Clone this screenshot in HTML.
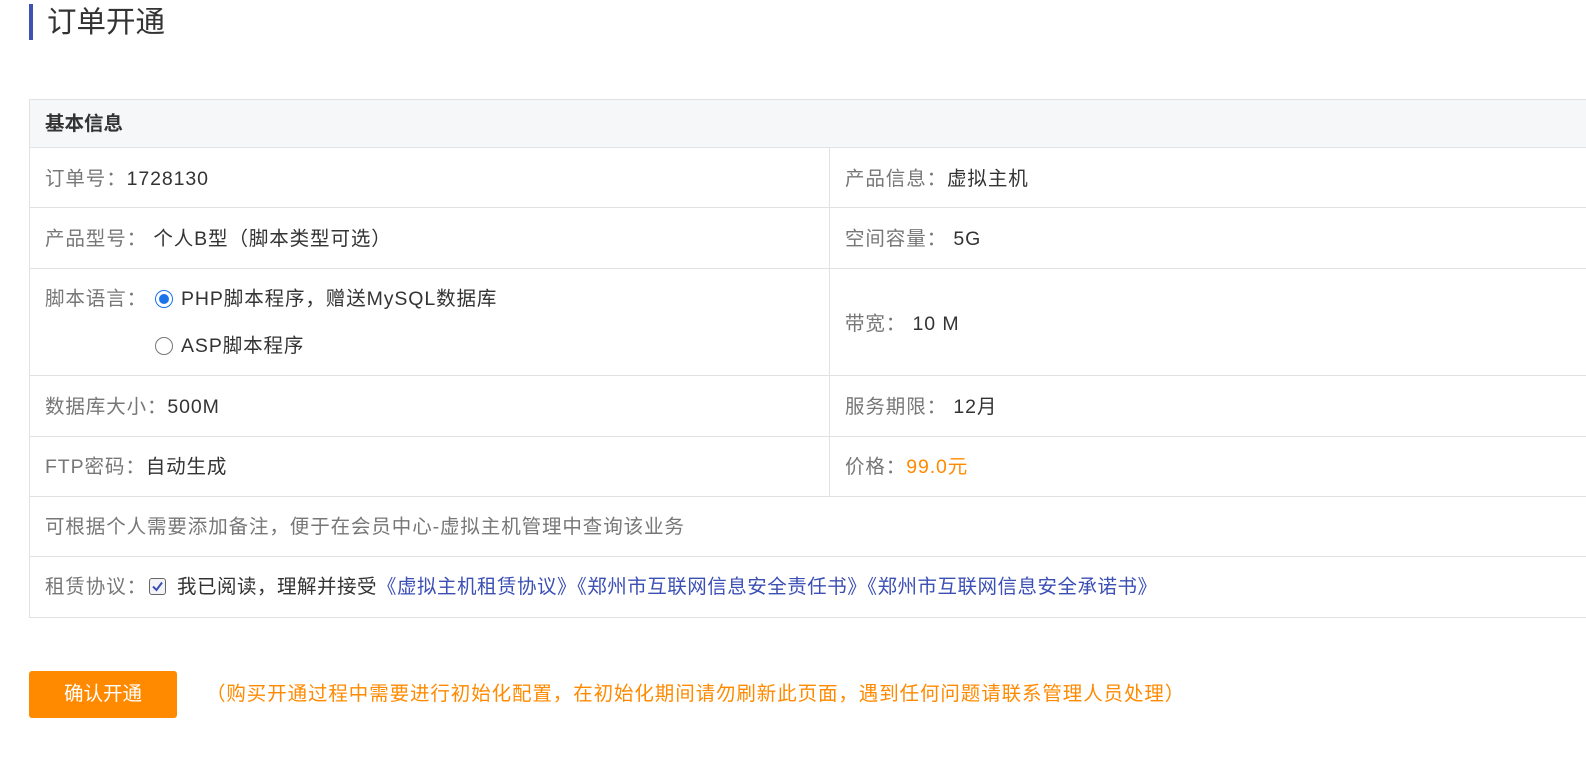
<!DOCTYPE html>
<html><head><meta charset="utf-8"><style>
body{margin:0;width:1586px;height:761px;overflow:hidden;background:#fff;font-family:"Liberation Sans","Noto Sans CJK SC",sans-serif;color:#333;position:relative}
.a{position:absolute;white-space:nowrap}
.l{color:#777}
.h{position:absolute;left:29px;width:1600px;height:1px;background:#e2e2e2}
.v{position:absolute;width:1px;background:#e2e2e2}
.t{font-size:19.5px;line-height:26px;letter-spacing:0.9px}
.lnk{color:#3c4fb4}
</style></head><body>
<div class="a" style="left:29px;top:4px;width:4px;height:36px;background:#3f51b5"></div>
<div class="a" style="left:47px;top:3px;font-size:29.5px;line-height:40px;color:#333">订单开通</div>

<div class="a" style="left:29px;top:99px;width:1600px;height:49px;background:#f6f7f9"></div>
<div class="h" style="top:99px"></div>
<div class="h" style="top:147px"></div>
<div class="h" style="top:207px"></div>
<div class="h" style="top:268px"></div>
<div class="h" style="top:375px"></div>
<div class="h" style="top:436px"></div>
<div class="h" style="top:496px"></div>
<div class="h" style="top:556px"></div>
<div class="h" style="top:617px"></div>
<div class="v" style="left:29px;top:99px;height:519px"></div>
<div class="v" style="left:829px;top:148px;height:348px"></div>

<div class="a t" style="left:45px;top:111px;font-weight:bold;color:#333;letter-spacing:0">基本信息</div>
<div class="a t" style="left:45px;top:166px"><span class="l">订单号：</span>1728130</div>
<div class="a t" style="left:845px;top:166px"><span class="l">产品信息：</span>虚拟主机</div>
<div class="a t" style="left:45px;top:226px"><span class="l">产品型号：</span> 个人B型（脚本类型可选）</div>
<div class="a t" style="left:845px;top:226px"><span class="l">空间容量：</span> 5G</div>
<div class="a t" style="left:45px;top:286px"><span class="l">脚本语言：</span></div>
<div class="a" style="left:155px;top:290px;width:18px;height:18px;border:1px solid #1a73e8;border-radius:50%;box-sizing:border-box"><div style="position:absolute;left:3px;top:3px;width:10px;height:10px;border-radius:50%;background:#1a73e8"></div></div>
<div class="a t" style="left:181px;top:286px">PHP脚本程序，赠送MySQL数据库</div>
<div class="a" style="left:155px;top:337px;width:18px;height:18px;border:1px solid #777;border-radius:50%;box-sizing:border-box"></div>
<div class="a t" style="left:181px;top:333px">ASP脚本程序</div>
<div class="a t" style="left:845px;top:311px"><span class="l">带宽：</span> 10 M</div>
<div class="a t" style="left:45px;top:394px"><span class="l">数据库大小：</span>500M</div>
<div class="a t" style="left:845px;top:394px"><span class="l">服务期限：</span> 12月</div>
<div class="a t" style="left:45px;top:454px"><span class="l">FTP密码：</span>自动生成</div>
<div class="a t" style="left:845px;top:454px"><span class="l">价格：</span><span style="color:#ff8a00">99.0元</span></div>
<div class="a t l" style="left:45px;top:514px">可根据个人需要添加备注，便于在会员中心-虚拟主机管理中查询该业务</div>
<div class="a t" style="left:45px;top:574px"><span class="l">租赁协议：</span></div>
<div class="a" style="left:149px;top:578px;width:17px;height:17px;border:1px solid #666;border-radius:3px;box-sizing:border-box;background:#f4f4f8"><svg width="15" height="15" style="position:absolute;left:0;top:0"><path d="M3 7.5 L6.5 11 L12 3.5" stroke="#3c4fb4" stroke-width="2" fill="none"/></svg></div>
<div class="a t" style="left:177px;top:574px;letter-spacing:0.5px">我已阅读，理解并接受<span class="lnk">《虚拟主机租赁协议》《郑州市互联网信息安全责任书》《郑州市互联网信息安全承诺书》</span></div>

<div class="a" style="left:29px;top:671px;width:148px;height:47px;background:#ff8a00;border-radius:3px;color:#fff;font-size:19.5px;line-height:47px;text-align:center">确认开通</div>
<div class="a t" style="left:206px;top:681px;color:#ff8a00">（购买开通过程中需要进行初始化配置，在初始化期间请勿刷新此页面，遇到任何问题请联系管理人员处理）</div>
</body></html>
